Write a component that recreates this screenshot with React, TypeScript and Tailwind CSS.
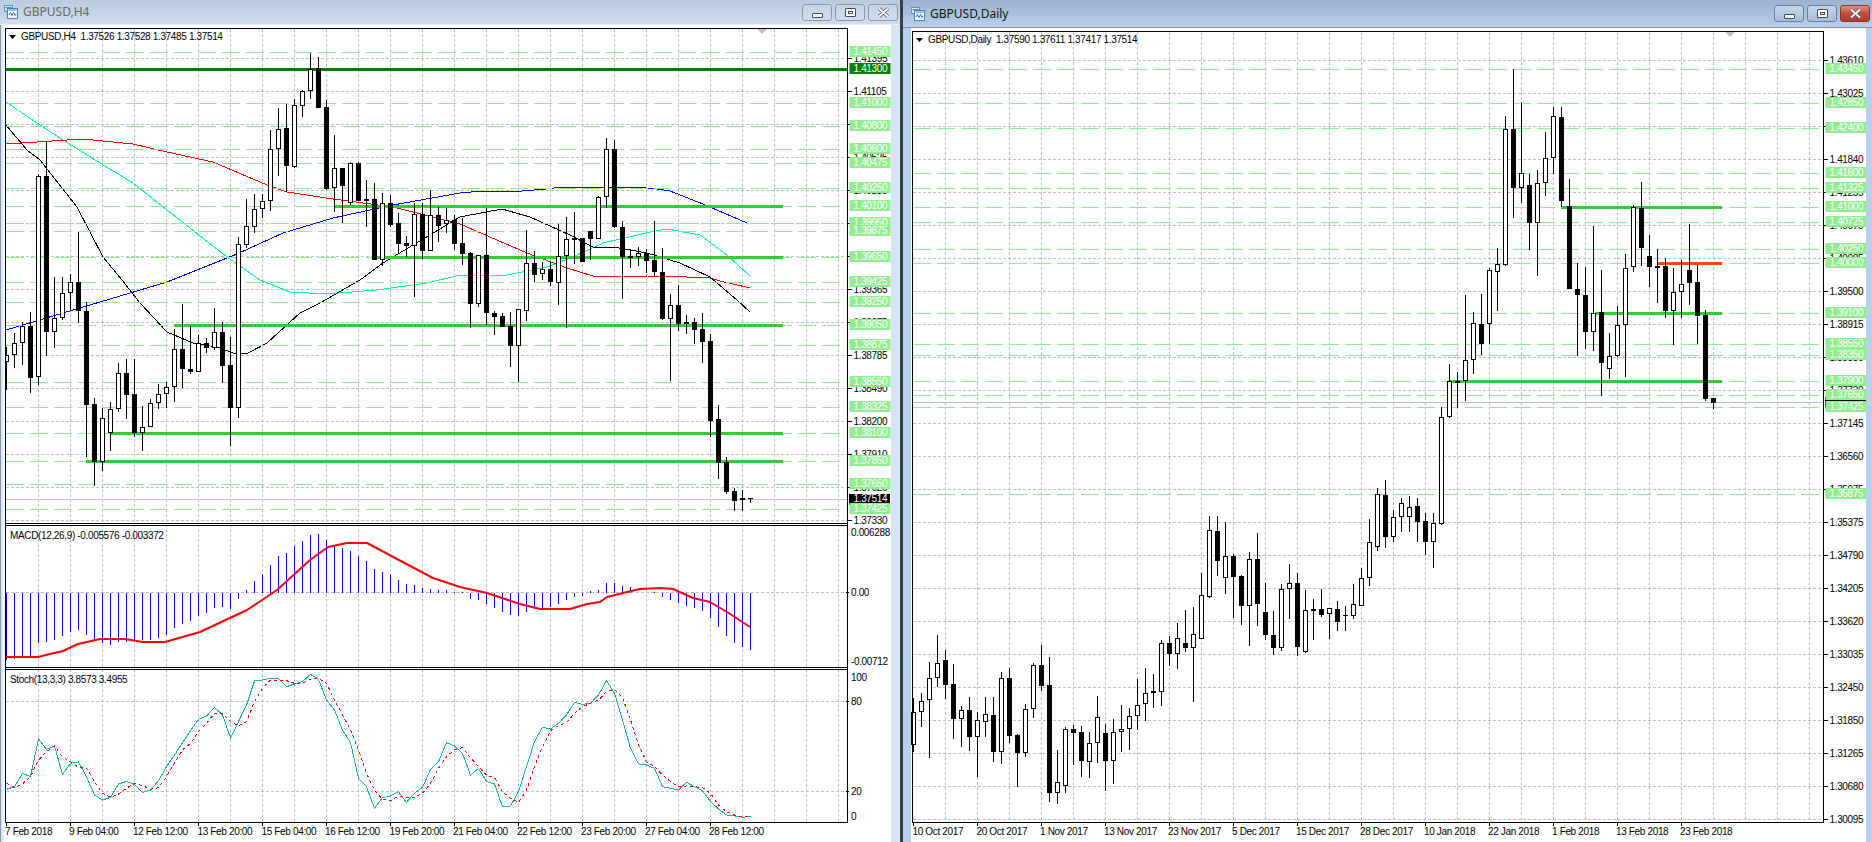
type Candle = [number, number, number, number, number];
type Level = [number, string];
type Point = [number, number];

const FONT = "'Liberation Sans', Arial, sans-serif";

// wick top, wick bottom, body top, body bottom, 1 = bull (white)
const h4Candles: Candle[] = [
  [347,390,355,362,1],[333,368,343,355,1],[322,365,326,343,1],[312,393,326,378,0],[174,385,176,377,1],
  [142,356,176,332,0],[277,348,318,332,1],[277,320,293,318,1],[274,310,282,293,1],[232,323,282,311,0],
  [302,457,311,405,0],[398,486,404,462,0],[408,471,418,462,1],[402,451,409,433,1],[363,412,373,409,1],
  [359,419,373,395,0],[359,437,394,433,0],[406,451,427,433,1],[399,427,403,427,1],[384,409,394,403,1],
  [382,408,387,394,1],[329,402,349,387,1],[304,388,349,369,0],[326,374,369,372,0],[335,372,343,372,1],
  [338,353,343,348,0],[308,350,332,348,1],[322,383,332,366,0],[337,446,365,408,0],[237,418,244,408,1],
  [199,248,226,245,1],[194,233,209,227,1],[194,218,201,209,1],[130,211,149,201,1],[108,176,129,149,1],
  [104,192,128,166,0],[99,168,105,167,1],[90,117,91,106,1],[53,99,69,91,1],[57,108,68,108,0],
  [100,190,107,189,0],[135,212,168,188,1],[168,223,168,186,0],[162,205,163,203,1],[162,201,163,201,0],
  [180,227,199,201,0],[183,260,199,260,0],[193,266,203,260,1],[195,227,203,225,0],[213,253,223,244,0],
  [236,257,243,246,0],[203,297,214,246,1],[203,259,214,251,0],[190,251,215,251,1],[207,242,215,226,0],
  [208,233,220,224,1],[215,250,220,244,0],[218,265,243,254,0],[252,328,253,304,0],[255,307,255,304,1],
  [208,325,255,313,0],[311,335,313,317,0],[313,327,316,327,0],[312,367,326,346,0],[309,382,309,346,1],
  [230,321,263,311,1],[251,282,263,275,0],[262,280,269,274,1],[262,286,269,282,0],[224,305,256,283,1],
  [217,328,239,256,1],[212,264,238,240,0],[238,262,238,262,0],[231,260,231,239,0],[196,239,197,239,1],
  [138,208,149,197,1],[140,228,149,227,0],[221,299,227,257,0],[249,268,256,258,0],[247,266,253,257,1],
  [249,273,253,261,0],[221,276,260,272,0],[248,320,272,319,0],[294,381,305,319,1],[285,331,305,324,0],
  [315,334,322,324,0],[318,344,322,330,0],[313,363,329,342,0],[334,437,341,421,0],[405,479,419,463,0],
  [457,494,462,492,0],[488,511,491,501,0],[490,511,498,500,1],[498,503,498,499,0],
];

const dailyCandles: Candle[] = [
  [698,752,712,745,1],[693,727,701,712,1],[662,758,678,700,1],[635,687,663,678,1],[650,699,660,685,0],
  [664,739,684,719,0],[706,747,710,719,1],[697,751,710,737,0],[712,777,720,737,1],[697,737,714,722,1],
  [697,762,715,752,0],[672,764,678,752,1],[668,743,678,736,0],[734,787,735,753,0],[704,757,709,753,1],
  [663,718,665,709,1],[645,691,665,686,0],[657,802,685,793,0],[750,804,782,793,1],[727,793,729,786,1],
  [725,765,729,733,0],[726,777,732,761,0],[732,778,743,762,1],[696,763,717,743,1],[724,791,733,761,0],
  [719,784,732,761,1],[705,752,729,732,1],[708,750,716,729,1],[679,730,705,716,1],[668,721,693,704,1],
  [674,708,691,693,1],[640,706,643,692,1],[636,666,643,654,0],[623,669,638,654,1],[610,652,643,648,0],
  [607,702,634,648,1],[573,639,595,639,1],[516,598,530,597,1],[516,576,531,561,0],[522,594,556,578,1],
  [554,618,556,577,0],[575,625,576,606,0],[552,646,559,606,1],[533,626,559,604,0],[583,640,612,635,0],
  [611,655,635,648,0],[584,651,589,648,1],[564,619,583,589,1],[573,656,583,647,0],[590,653,610,652,1],
  [599,640,609,611,0],[589,617,609,615,0],[608,639,608,614,1],[601,631,609,622,0],[606,631,615,616,0],
  [584,619,604,616,1],[568,606,578,606,1],[519,586,542,578,1],[488,551,494,547,1],[480,548,495,537,0],
  [510,542,517,537,1],[498,532,503,517,1],[496,532,507,517,1],[498,542,506,522,0],[513,555,521,542,0],
  [513,568,523,542,1],[407,525,417,524,1],[364,418,381,417,1],[372,408,381,383,1],[295,401,360,381,1],
  [312,374,323,360,1],[294,355,324,344,0],[268,344,270,324,1],[248,311,264,272,1],[116,266,129,265,1],
  [69,218,129,188,0],[102,203,173,188,1],[174,250,185,223,0],[170,276,183,223,1],[132,196,158,183,1],
  [107,174,116,158,1],[107,207,117,201,0],[179,289,206,289,0],[263,356,289,295,0],[267,349,295,332,0],
  [226,351,313,332,1],[270,396,312,363,0],[333,379,356,369,1],[306,357,325,356,1],[254,377,268,325,1],
  [205,272,207,267,1],[182,266,208,248,0],[235,287,256,267,0],[249,303,266,268,0],[258,318,266,311,0],
  [268,345,292,311,1],[260,318,284,292,1],[224,305,270,283,0],[265,344,282,316,0],[310,401,315,399,0],
  [398,409,398,403,0],
];

const h4Levels: Level[] = [
  [52.5,"1.41450"],[103.5,"1.41000"],[126.5,"1.40800"],[149.5,"1.40600"],[163.5,"1.40475"],[188.5,"1.40250"],
  [206.5,"1.40100"],[223.5,"1.39950"],[231.5,"1.39875"],[257.5,"1.39650"],[282.5,"1.39425"],[302.5,"1.39250"],
  [325.5,"1.39050"],[345.5,"1.38875"],[382.5,"1.38550"],[407.5,"1.38325"],[433.5,"1.38100"],[461.5,"1.37850"],
  [484.5,"1.37650"],[509.5,"1.37425"],
];

const dailyLevels: Level[] = [
  [69.5,"1.43450"],[103.5,"1.42850"],[128.5,"1.42400"],[173.5,"1.41600"],[188.5,"1.41325"],[207.5,"1.41000"],
  [222.5,"1.40725"],[249.5,"1.40250"],[263.5,"1.40000"],[313.5,"1.39100"],[344.5,"1.38550"],[355.5,"1.38350"],
  [381.5,"1.37900"],[395.5,"1.37650"],[407.5,"1.37425"],[494.5,"1.35875"],
];

const h4Prices = ["1.41395","1.41105","1.40815","1.40525","1.40235","1.39945","1.39655","1.39365","1.39075","1.38785","1.38490","1.38200","1.37910","1.37620","1.37330"];
const dailyPrices = ["1.43610","1.43025","1.42440","1.41840","1.41255","1.40670","1.40085","1.39500","1.38915","1.38330","1.37730","1.37145","1.36560","1.35975","1.35375","1.34790","1.34205","1.33620","1.33035","1.32450","1.31850","1.31265","1.30680","1.30095"];

const h4Times = [["7 Feb 2018",5],["9 Feb 04:00",69],["12 Feb 12:00",133],["13 Feb 20:00",197.5],["15 Feb 04:00",261.5],["16 Feb 12:00",325],["19 Feb 20:00",389.5],["21 Feb 04:00",453],["22 Feb 12:00",517],["23 Feb 20:00",581],["27 Feb 04:00",645],["28 Feb 12:00",709]] as const;
const dailyTimes = [["10 Oct 2017",912.5],["20 Oct 2017",976.5],["1 Nov 2017",1040],["13 Nov 2017",1104],["23 Nov 2017",1168],["5 Dec 2017",1232],["15 Dec 2017",1296],["28 Dec 2017",1360],["10 Jan 2018",1424],["22 Jan 2018",1488],["1 Feb 2018",1552],["13 Feb 2018",1616],["23 Feb 2018",1680]] as const;

const blueMa: Point[] = [[6,330],[167,282],[237,254],[283,233],[333,218],[393,205],[460,193],[482,191],[522,191],[546,189],[562,187],[602,187],[635,187],[657,189],[670,191],[703,204],[747,223]];
const redMa: Point[] = [[6,144],[37,142],[83,139],[133,144],[167,152],[213,162],[267,185],[287,192],[333,199],[393,207],[460,224],[527,253],[567,268],[593,276],[647,276],[687,277],[710,278],[720,281],[750,288]];
const springMa: Point[] = [[6,102],[40,125],[60,138],[100,163],[133,183],[167,210],[227,257],[260,280],[290,292],[327,294],[377,290],[427,283],[460,275],[507,275],[547,267],[573,257],[603,243],[650,232],[667,229],[700,235],[727,255],[750,276]];
const blackMa: Point[] = [[6,125],[27,150],[40,160],[77,207],[103,257],[122,280],[140,303],[167,332],[193,343],[217,347],[233,353],[248,353],[267,343],[300,313],[320,303],[360,280],[383,263],[413,245],[460,217],[502,209],[530,217],[570,235],[593,247],[613,247],[647,253],[680,263],[710,277],[737,300],[750,312]];
const macdSignal: Point[] = [[6,657],[38,657],[50,654],[63,651],[78,644],[100,639],[125,639],[143,642],[165,642],[200,632],[247,610],[277,590],[310,560],[328,547],[347,543],[367,543],[397,559],[433,578],[460,587],[487,593],[520,604],[540,609],[570,609],[587,604],[600,602],[607,597],[627,592],[640,589],[660,588],[673,589],[693,598],[710,602],[727,612],[750,627]];

// indicator values below were read at 3x from y=560, one per bar
const macdBars = [300,297,292,292,248,245,240,228,216,210,225,240,248,255,245,247,242,240,240,235,225,205,192,183,168,158,145,142,148,117,90,63,42,15,-12,-22,-42,-58,-75,-78,-60,-45,-35,-27,-12,3,27,36,43,60,72,75,83,87,90,90,95,95,117,120,132,143,155,165,168,155,147,145,140,132,120,110,107,92,90,68,68,78,82,99,100,97,110,120,130,137,143,152,175,200,228,250,262,270];
const stochMain = [688,680,640,650,537,568,558,643,610,606,650,705,720,712,672,664,673,697,690,662,620,585,548,512,478,468,442,465,533,485,435,363,360,355,355,380,372,365,343,358,420,450,510,548,655,680,745,713,708,695,727,700,682,628,605,548,558,580,645,625,665,672,740,738,695,620,545,502,507,490,465,427,433,430,405,362,400,480,565,612,615,625,680,685,690,667,680,692,725,747,765,768,772,769];
const stochSignal = [670,682,672,650,600,575,558,590,605,622,625,665,700,712,702,685,670,677,688,683,650,610,570,550,515,490,460,460,485,498,485,425,385,360,360,362,370,370,358,355,370,420,465,510,570,640,690,718,723,708,712,712,700,670,625,590,570,563,593,620,645,653,695,715,727,690,620,560,512,497,488,460,440,430,420,395,388,412,480,555,605,620,645,665,680,678,680,683,700,735,755,765,770,770];

const pts = (p: Point[]) => p.map(([x, y]) => `${x},${y}`).join(" ");
const barX = (k: number) => 6.5 + 8 * k;
const fromCrop = (v: number) => 560 + v / 3;

function Candles({ data, startX }: { data: Candle[]; startX: number }) {
  return (
    <g shapeRendering="crispEdges">
      {data.map(([hi, lo, top, bottom, bull], i) => {
        const x = startX + 8 * i;
        return (
          <g key={i}>
            <line x1={x} x2={x} y1={hi} y2={lo} stroke="#000" />
            {bull ? (
              <rect x={x - 2} y={top + 0.5} width={4} height={Math.max(bottom - top - 1, 1)} fill="#fff" stroke="#000" />
            ) : (
              <rect x={x - 2.5} y={top} width={5} height={Math.max(bottom - top, 1)} fill="#000" />
            )}
          </g>
        );
      })}
    </g>
  );
}

function Grid({ xs, ys, x1, x2, y1, y2 }: { xs: number[]; ys: number[]; x1: number; x2: number; y1: number; y2: number }) {
  return (
    <g stroke="#c0c0c0" strokeDasharray="3 2" shapeRendering="crispEdges">
      {xs.map((x) => <line key={x} x1={x} x2={x} y1={y1} y2={y2} />)}
      {ys.map((y) => <line key={y} x1={x1} x2={x2} y1={y} y2={y} />)}
    </g>
  );
}

function LevelLines({ levels, x1, x2 }: { levels: Level[]; x1: number; x2: number }) {
  return (
    <g stroke="#90ee90" strokeDasharray="18 6" shapeRendering="crispEdges">
      {levels.map(([y]) => <line key={y} x1={x1} x2={x2} y1={y} y2={y} />)}
    </g>
  );
}

function ThickLine({ y, x1, x2, color = "#32cd32" }: { y: number; x1: number; x2: number; color?: string }) {
  return <rect x={x1} y={y - 1.5} width={x2 - x1} height={3} fill={color} shapeRendering="crispEdges" />;
}

function AxisPrice({ x, y, label }: { x: number; y: number; label: string }) {
  return (
    <g>
      <line x1={x - 5.5} x2={x - 2} y1={y} y2={y} stroke="#000" shapeRendering="crispEdges" />
      <text x={x} y={y + 3.5} fill="#000">{label}</text>
    </g>
  );
}

function PriceBox({ x, y, label, fill = "#90ee90" }: { x: number; y: number; label: string; fill?: string }) {
  return (
    <g>
      <rect x={x - 4} y={Math.floor(y) - 6} width={41} height={11} fill={fill} />
      <text x={x} y={y + 2.5} fill="#fff">{label}</text>
    </g>
  );
}

function TimeAxis({ items, startX, count }: { items: readonly (readonly [string, number])[]; startX: number; count: number }) {
  return (
    <g>
      {Array.from({ length: count }, (_, i) => (
        <line key={i} x1={startX + 64 * i} x2={startX + 64 * i} y1={823} y2={826} stroke="#000" shapeRendering="crispEdges" />
      ))}
      {items.map(([label, x]) => <text key={label} x={x} y={835} fill="#000">{label}</text>)}
    </g>
  );
}

function Head({ x, y, children }: { x: number; y: number; children: React.ReactNode }) {
  return <text x={x} y={y} fill="#000">{children}</text>;
}

function ChartIcon() {
  return (
    <svg width="14" height="14" viewBox="0 0 14 14" className="shrink-0">
      <rect x="0.5" y="0.5" width="8" height="6" fill="#d6e6f7" stroke="#5f8fc9" />
      <rect x="3.5" y="3.5" width="10" height="10" fill="#eef5fc" stroke="#4d7fbf" />
      <path d="M1.5 2.5h6M4.5 5h8" stroke="#4d7fbf" />
      <path d="M5 10l1.5-2.5 1.5 3 1.5-3 1.5 3 1-1.5" fill="none" stroke="#3b6fb0" />
    </svg>
  );
}

function WinButton({ kind, active }: { kind: "min" | "max" | "close"; active: boolean }) {
  const tone =
    kind === "close" && active
      ? "bg-gradient-to-b from-[#d9917f] via-[#c0503e] to-[#b23a2b] border-[#7a3a32]"
      : active
        ? "bg-gradient-to-b from-[#c6d8ec] to-[#a4bedb] border-[#6c7f96]"
        : "bg-gradient-to-b from-[#c4d4e6] to-[#d0dfee] border-[#8a97a7]";
  return (
    <div className={`flex h-[17px] w-[30px] items-center justify-center rounded-[3px] border ${tone}`}>
      {kind === "min" && <div className="mt-1.5 h-[5px] w-[11px] rounded-[1px] border border-[#3f4a56] bg-white" />}
      {kind === "max" && (
        <div className="flex h-[9px] w-[11px] items-center justify-center rounded-[1px] border border-[#3f4a56] bg-white">
          <div className="h-[3px] w-[5px] border border-[#3f4a56]" />
        </div>
      )}
      {kind === "close" && (
        <svg width="13" height="11" viewBox="0 0 13 11">
          <path d="M2 1.5l9 8M11 1.5l-9 8" stroke="#3f4a56" strokeWidth="3.4" />
          <path d="M2 1.5l9 8M11 1.5l-9 8" stroke="#fff" strokeWidth="2" />
        </svg>
      )}
    </div>
  );
}

function TitleBar({ title, active }: { title: string; active: boolean }) {
  return (
    <div
      className={`flex shrink-0 items-center justify-between pr-[2px] ${
        active
          ? "h-[28px] border-b border-[#8c8f93] bg-gradient-to-b from-[#9ab2cf] to-[#b9d1ea] pl-[8px]"
          : "h-[25px] border-b border-[#e4ebf2] bg-gradient-to-b from-[#b9cadc] to-[#cfdfee] pl-1"
      }`}
    >
      <div className="flex items-center gap-[5px]">
        <ChartIcon />
        <span className={`font-['Noto_Sans'] text-[12px] ${active ? "text-[#111]" : "text-[#666]"}`}>{title}</span>
      </div>
      <div className="flex gap-[3px]">
        <WinButton kind="min" active={active} />
        <WinButton kind="max" active={active} />
        <WinButton kind="close" active={active} />
      </div>
    </div>
  );
}

function H4Chart() {
  const xs = Array.from({ length: 26 }, (_, i) => 38.5 + 32 * i);
  const ys = Array.from({ length: 15 }, (_, i) => 58.5 + 33 * i);
  return (
    <svg width="886" height="817" viewBox="5 25 886 817" className="block" fontFamily={FONT} fontSize="10" letterSpacing="-0.35">
      <Grid xs={xs} ys={[...ys, 592.5, 701.5, 791.5]} x1={6} x2={847} y1={29} y2={822} />
      <line x1={6} x2={847} y1={499.5} y2={499.5} stroke="#c0c0c0" shapeRendering="crispEdges" />

      <g fill="none" strokeWidth="1" shapeRendering="crispEdges">
        <polyline points={pts(springMa)} stroke="#00fa9a" />
        <polyline points={pts(redMa)} stroke="#ff0000" />
        <polyline points={pts(blueMa)} stroke="#0000ff" />
        <polyline points={pts(blackMa)} stroke="#000" />
      </g>

      <LevelLines levels={h4Levels} x1={6} x2={840} />
      <ThickLine y={69.5} x1={6} x2={847} color="#008000" />
      <ThickLine y={206.5} x1={335} x2={783} />
      <ThickLine y={257.5} x1={377} x2={783} />
      <ThickLine y={325.5} x1={174} x2={783} />
      <ThickLine y={433.5} x1={111} x2={783} />
      <ThickLine y={461.5} x1={86} x2={783} />

      <Candles data={h4Candles} startX={6.5} />

      {/* MACD pane */}
      <rect x={6} y={524} width={842} height={2} fill="#fff" />
      <g stroke="#0000ff" shapeRendering="crispEdges">
        {macdBars.map((v, i) => (
          <line key={i} x1={barX(i)} x2={barX(i)} y1={592.5} y2={fromCrop(v)} />
        ))}
      </g>
      <polyline points={pts(macdSignal)} fill="none" stroke="#ff0000" strokeWidth="2" strokeLinejoin="round" />

      {/* Stochastic pane */}
      <polyline points={stochMain.map((v, i) => `${barX(i)},${fromCrop(v)}`).join(" ")} fill="none" stroke="#20b2aa" shapeRendering="crispEdges" />
      <polyline points={stochSignal.map((v, i) => `${barX(i)},${fromCrop(v)}`).join(" ")} fill="none" stroke="#ff0000" strokeDasharray="3 3" shapeRendering="crispEdges" />

      {/* frames */}
      <g stroke="#000" shapeRendering="crispEdges">
        <line x1={5.5} x2={5.5} y1={28} y2={823} />
        <line x1={5} x2={848} y1={28.5} y2={28.5} />
        <line x1={847.5} x2={847.5} y1={28} y2={823} />
        <line x1={5} x2={848} y1={523.5} y2={523.5} />
        <line x1={5} x2={848} y1={525.5} y2={525.5} />
        <line x1={5} x2={848} y1={667.5} y2={667.5} />
        <line x1={5} x2={848} y1={669.5} y2={669.5} />
        <line x1={5} x2={848} y1={822.5} y2={822.5} />
      </g>
      <path d="M757 29h10l-5 5z" fill="#c0c0c0" />

      <path d="M9 35h7l-3.5 4z" fill="#000" />
      <Head x={21} y={40}>GBPUSD,H4&nbsp;&nbsp;1.37526 1.37528 1.37485 1.37514</Head>
      <Head x={10} y={539}>MACD(12,26,9) -0.005576 -0.003372</Head>
      <Head x={10} y={682.5}>Stoch(13,3,3) 3.8573 3.4955</Head>

      {ys.map((y, i) => <AxisPrice key={y} x={853.5} y={y} label={h4Prices[i]} />)}
      <rect x={849} y={494} width={41} height={11} fill="#000" />
      <text x={853.5} y={502} fill="#fff">1.37514</text>
      {h4Levels.map(([y, label]) => <PriceBox key={y} x={853.5} y={y} label={label} />)}
      <PriceBox x={853.5} y={69.5} label="1.41300" fill="#008000" />

      <text x={851} y={536} fill="#000">0.006288</text>
      <AxisPrice x={851} y={592.5} label="0.00" />
      <text x={851} y={664.5} fill="#000">-0.00712</text>
      <text x={851} y={680.5} fill="#000">100</text>
      <AxisPrice x={851} y={701.5} label="80" />
      <AxisPrice x={851} y={791.5} label="20" />
      <text x={851} y={819.5} fill="#000">0</text>

      <TimeAxis items={h4Times} startX={6.5} count={12} />
    </svg>
  );
}

function DailyChart() {
  const xs = Array.from({ length: 28 }, (_, i) => 945.5 + 32 * i);
  const ys = Array.from({ length: 24 }, (_, i) => 60.5 + 33 * i);
  return (
    <svg width="955" height="814" viewBox="911 28 955 814" className="block" fontFamily={FONT} fontSize="10" letterSpacing="-0.35">
      <Grid xs={xs} ys={ys} x1={913} x2={1823} y1={32} y2={822} />
      <line x1={913} x2={1823} y1={402.5} y2={402.5} stroke="#c0c0c0" shapeRendering="crispEdges" />

      <LevelLines levels={dailyLevels} x1={913} x2={1819} />
      <ThickLine y={207.5} x1={1561} x2={1722} />
      <ThickLine y={263.5} x1={1657} x2={1722} color="#ff4500" />
      <ThickLine y={313.5} x1={1595} x2={1722} />
      <ThickLine y={381.5} x1={1450} x2={1722} />

      <Candles data={dailyCandles} startX={913.5} />

      <g stroke="#000" shapeRendering="crispEdges">
        <line x1={912.5} x2={912.5} y1={31} y2={823} />
        <line x1={912} x2={1824} y1={31.5} y2={31.5} />
        <line x1={1823.5} x2={1823.5} y1={31} y2={823} />
        <line x1={912} x2={1824} y1={822.5} y2={822.5} />
      </g>
      <path d="M1725 32h10l-5 5z" fill="#c0c0c0" />

      <path d="M916 38h7l-3.5 4z" fill="#000" />
      <Head x={928} y={43}>GBPUSD,Daily&nbsp;&nbsp;1.37590 1.37611 1.37417 1.37514</Head>

      {ys.map((y, i) => <AxisPrice key={y} x={1829.5} y={y} label={dailyPrices[i]} />)}
      <rect x={1825} y={397} width={41} height={11} fill="#000" />
      {dailyLevels.map(([y, label]) => <PriceBox key={y} x={1829.5} y={y} label={label} />)}

      <TimeAxis items={dailyTimes} startX={913.5} count={13} />
    </svg>
  );
}

export default function App() {
  return (
    <div className="flex h-[842px] w-[1872px] overflow-hidden bg-white">
      <div className="flex h-full w-[900px] shrink-0 flex-col">
        <TitleBar title="GBPUSD,H4" active={false} />
        <div className="flex flex-1">
          <div className="w-[5px] shrink-0 border-l border-[#8f9aa6] bg-gradient-to-r from-[#cfdfee] to-white" />
          <H4Chart />
          <div className="w-[9px] shrink-0 bg-[#d6e5f4]" />
        </div>
      </div>
      <div className="w-[3px] shrink-0 bg-[#3a3f45]" />
      <div className="flex h-full flex-1 flex-col">
        <TitleBar title="GBPUSD,Daily" active />
        <div className="flex flex-1">
          <div className="w-[8px] shrink-0 bg-[#b8d0ea]" />
          <DailyChart />
          <div className="w-[6px] shrink-0 bg-[#b8d0ea]" />
        </div>
      </div>
    </div>
  );
}
